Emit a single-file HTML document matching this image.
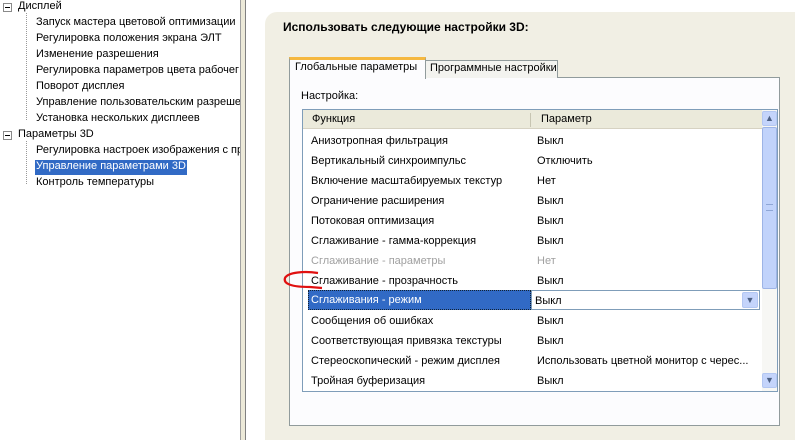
<!DOCTYPE html>
<html><head><meta charset="utf-8"><style>
*{margin:0;padding:0;box-sizing:border-box}
html{overflow:hidden;width:795px;height:440px}
body{width:795px;height:440px;overflow:hidden;background:#fff;font-family:"Liberation Sans",sans-serif;font-size:11px;color:#000;position:relative}
.a{position:absolute;white-space:nowrap}
.t{position:absolute;white-space:nowrap;font-size:11px}
.dot{position:absolute;border-left:1px dotted #999}
.row{position:absolute;left:311px;height:20px;line-height:20px;font-size:11px;white-space:nowrap}
.p{position:absolute;left:537px;height:20px;line-height:20px;font-size:11px;white-space:nowrap}
.box{position:absolute;width:9px;height:9px;border:1px solid #8a8a8a;background:#fff}
.box:after{content:"";position:absolute;left:1px;top:3px;width:5px;height:1px;background:#000}
</style></head><body>
<div class="box" style="left:3px;top:3px"></div>
<div class="t" style="left:18px;top:0px">Дисплей</div>
<div class="dot" style="left:26px;top:13px;height:107px"></div>
<div class="t" style="left:36px;top:16px">Запуск мастера цветовой оптимизации</div>
<div class="t" style="left:36px;top:32px">Регулировка положения экрана ЭЛТ</div>
<div class="t" style="left:36px;top:48px">Изменение разрешения</div>
<div class="t" style="left:36px;top:64px">Регулировка параметров цвета рабочег</div>
<div class="t" style="left:36px;top:80px">Поворот дисплея</div>
<div class="t" style="left:36px;top:96px">Управление пользовательским разреше</div>
<div class="t" style="left:36px;top:112px">Установка нескольких дисплеев</div>
<div class="box" style="left:3px;top:131px"></div>
<div class="t" style="left:18px;top:128px">Параметры 3D</div>
<div class="dot" style="left:26px;top:141px;height:43px"></div>
<div class="t" style="left:36px;top:144px">Регулировка настроек изображения с пр</div>
<div class="a" style="left:35px;top:160px;width:152px;height:15px;background:#316ac5"></div>
<div class="t" style="left:36px;top:160px;color:#fff">Управление параметрами 3D</div>
<div class="t" style="left:36px;top:176px">Контроль температуры</div>
<div class="a" style="left:240px;top:0;width:555px;height:440px;background:#fff"></div>
<div class="a" style="left:240px;top:0;width:1px;height:440px;background:#a0a0a0"></div>
<div class="a" style="left:241px;top:0;width:4px;height:440px;background:#ece9d8"></div>
<div class="a" style="left:245px;top:0;width:1px;height:440px;background:#808080"></div>
<div class="a" style="left:265px;top:12px;width:530px;height:428px;background:#f1efe4;border-radius:12px 0 0 0"></div>
<div class="a" style="left:283px;top:20px;font-weight:bold;font-size:12px">Использовать следующие настройки 3D:</div>
<div class="a" style="left:289px;top:77px;width:491px;height:349px;background:#fcfcfe;border:1px solid #919b9c"></div>
<div class="a" style="left:425px;top:60px;width:133px;height:18px;background:#f3f3ef;border:1px solid #919b9c;border-bottom:none"></div>
<div class="t" style="left:430px;top:62px;font-size:11px">Программные настройки</div>
<div class="a" style="left:289px;top:57px;width:137px;height:22px;background:#fcfcfe;border:1px solid #919b9c;border-bottom:none;border-top:3px solid #f5b840"></div>
<div class="t" style="left:295px;top:61px;font-size:11px">Глобальные параметры</div>
<div class="t" style="left:301px;top:90px;font-size:11px">Настройка:</div>
<div class="a" style="left:302px;top:109px;width:476px;height:283px;background:#fff;border:1px solid #7f9db9"></div>
<div class="a" style="left:303px;top:110px;width:459px;height:19px;background:#ebeadb;border-bottom:1px solid #d6d2c2"></div>
<div class="a" style="left:530px;top:113px;width:1px;height:14px;background:#c7c5b2"></div>
<div class="t" style="left:312px;top:113px">Функция</div>
<div class="t" style="left:541px;top:113px">Параметр</div>
<div class="a" style="left:762px;top:110px;width:15px;height:281px;background:#f7f7f4"></div>
<div class="a" style="left:762px;top:111px;width:15px;height:15px;background:#c4d4fb;border:1px solid #b3c7f2;border-radius:2px;text-align:center;font-size:9px;line-height:13px;color:#4d6185">▲</div>
<div class="a" style="left:762px;top:127px;width:15px;height:162px;background:#c1d3fb;border:1px solid #9db4e6;border-radius:2px"></div>
<div class="a" style="left:766px;top:204px;width:7px;height:7px;border-top:1px solid #8ea6d6;border-bottom:1px solid #8ea6d6"></div>
<div class="a" style="left:762px;top:373px;width:15px;height:15px;background:#c4d4fb;border:1px solid #b3c7f2;border-radius:2px;text-align:center;font-size:9px;line-height:13px;color:#4d6185">▼</div>
<div class="row" style="top:131px">Анизотропная фильтрация</div><div class="p" style="top:131px">Выкл</div>
<div class="row" style="top:151px">Вертикальный синхроимпульс</div><div class="p" style="top:151px">Отключить</div>
<div class="row" style="top:171px">Включение масштабируемых текстур</div><div class="p" style="top:171px">Нет</div>
<div class="row" style="top:191px">Ограничение расширения</div><div class="p" style="top:191px">Выкл</div>
<div class="row" style="top:211px">Потоковая оптимизация</div><div class="p" style="top:211px">Выкл</div>
<div class="row" style="top:231px">Сглаживание - гамма-коррекция</div><div class="p" style="top:231px">Выкл</div>
<div class="row" style="top:251px;color:#a0a0a0">Сглаживание - параметры</div><div class="p" style="top:251px;color:#a0a0a0">Нет</div>
<div class="row" style="top:271px">Сглаживание - прозрачность</div><div class="p" style="top:271px">Выкл</div>
<div class="a" style="left:308px;top:290px;width:223px;height:20px;background:#316ac5;border:1px dotted #123"></div>
<div class="row" style="top:290px;color:#fff">Сглаживания - режим</div>
<div class="a" style="left:531px;top:290px;width:229px;height:20px;background:#fff;border:1px solid #7f9db9"></div>
<div class="p" style="top:291px;left:535px">Выкл</div>
<div class="a" style="left:742px;top:292px;width:16px;height:16px;background:#c4d4fb;border:1px solid #b3c7f2;border-radius:2px;text-align:center;font-size:9px;line-height:15px;color:#4d6185">▼</div>
<div class="row" style="top:311px">Сообщения об ошибках</div><div class="p" style="top:311px">Выкл</div>
<div class="row" style="top:331px">Соответствующая привязка текстуры</div><div class="p" style="top:331px">Выкл</div>
<div class="row" style="top:351px">Стереоскопический - режим дисплея</div><div class="p" style="top:351px">Использовать цветной монитор с черес...</div>
<div class="row" style="top:371px">Тройная буферизация</div><div class="p" style="top:371px">Выкл</div>
<svg class="a" style="left:280px;top:268px" width="50" height="26"><path d="M38 5 C25 3 8 4 5 10 C3 16 12 19 30 19 L42 20" fill="none" stroke="#e01010" stroke-width="2.2"/></svg>
</body></html>
